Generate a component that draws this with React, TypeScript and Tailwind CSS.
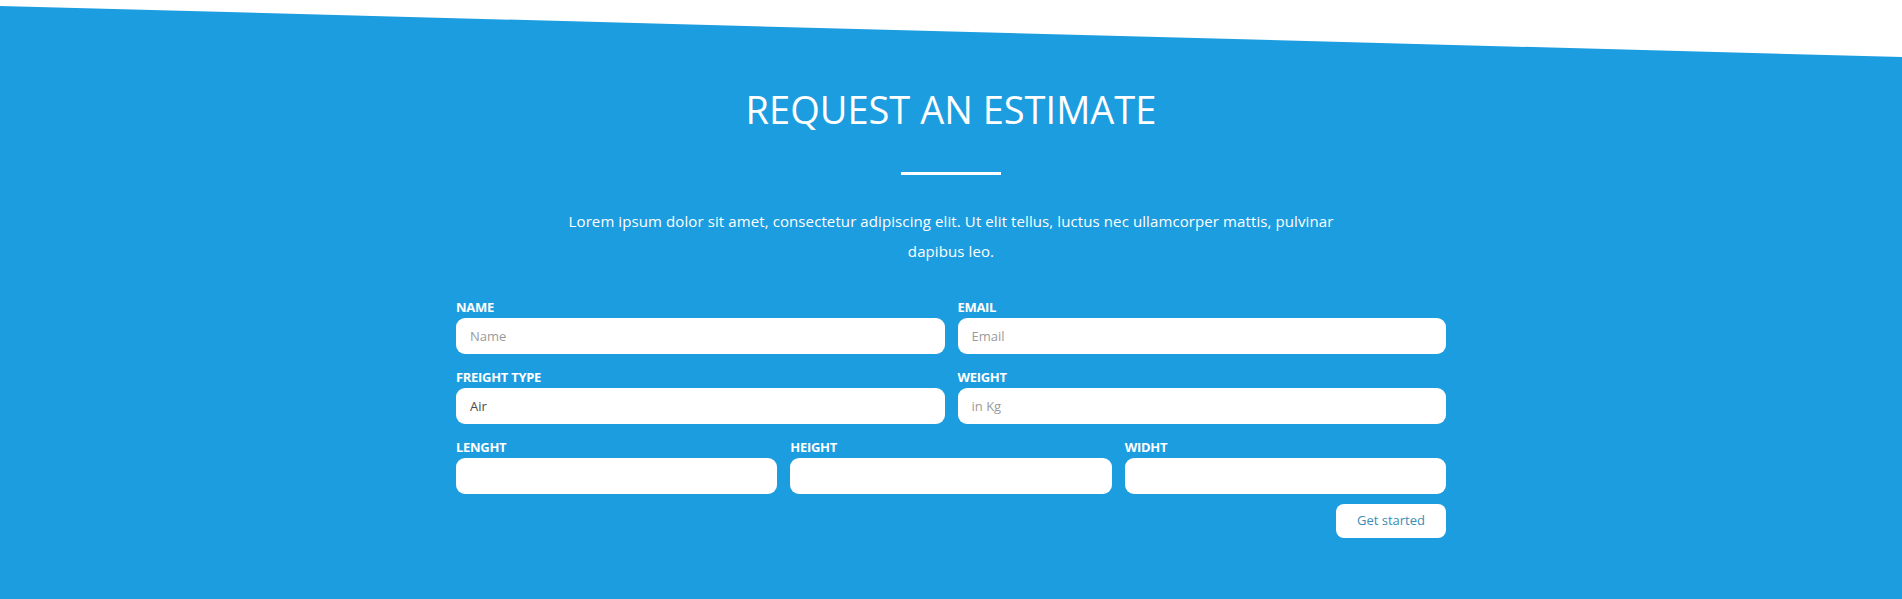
import React from 'react';

interface FieldProps {
  label: string;
  placeholder?: string;
  value?: string;
}

function Field({ label, placeholder, value }: FieldProps) {
  return (
    <label className="flex flex-col">
      <span className="mb-[3px] text-[13px] font-bold uppercase leading-[16px] tracking-[-0.3px] text-white">
        {label}
      </span>
      <input
        className="h-[36px] w-full rounded-[9px] bg-white px-[14px] text-[13px] text-[#4a4a4a] outline-none placeholder:text-[#9b9b9b]"
        placeholder={placeholder}
        defaultValue={value}
        readOnly={value !== undefined}
      />
    </label>
  );
}

export default function App() {
  return (
    <div className="relative h-[599px] w-full overflow-hidden bg-[#1c9ddf] font-['Open_Sans',sans-serif]">
      {/* slanted top edge */}
      <svg
        className="absolute left-0 top-0 h-[57px] w-full"
        viewBox="0 0 1902 57"
        preserveAspectRatio="none"
      >
        <polygon points="0,0 1902,0 1902,57 0,6" fill="#ffffff" />
      </svg>

      <div className="flex flex-col items-center pt-[85px]">
        <h2 className="text-[38px] font-normal leading-[48px] text-white">
          REQUEST AN ESTIMATE
        </h2>
        <div className="mt-[39px] h-[3px] w-[100px] bg-white" />
        <p className="mt-[31px] w-[790px] text-center text-[15px] leading-[30px] tracking-[0.1px] text-white">
          Lorem ipsum dolor sit amet, consectetur adipiscing elit. Ut elit tellus, luctus nec ullamcorper mattis, pulvinar
          dapibus leo.
        </p>

        <form className="mt-[33px] flex w-[990px] flex-col gap-y-[15px]">
          <div className="grid grid-cols-2 gap-x-[13px]">
            <Field label="Name" placeholder="Name" />
            <Field label="Email" placeholder="Email" />
          </div>
          <div className="grid grid-cols-2 gap-x-[13px]">
            <Field label="Freight Type" value="Air" />
            <Field label="Weight" placeholder="in Kg" />
          </div>
          <div className="grid grid-cols-3 gap-x-[13px]">
            <Field label="Lenght" />
            <Field label="Height" />
            <Field label="Widht" />
          </div>
          <div className="-mt-[5px] flex justify-end">
            <button
              type="button"
              className="h-[34px] w-[110px] rounded-[8px] bg-white text-[13px] text-[#3b8db6]"
            >
              Get started
            </button>
          </div>
        </form>
      </div>
    </div>
  );
}
